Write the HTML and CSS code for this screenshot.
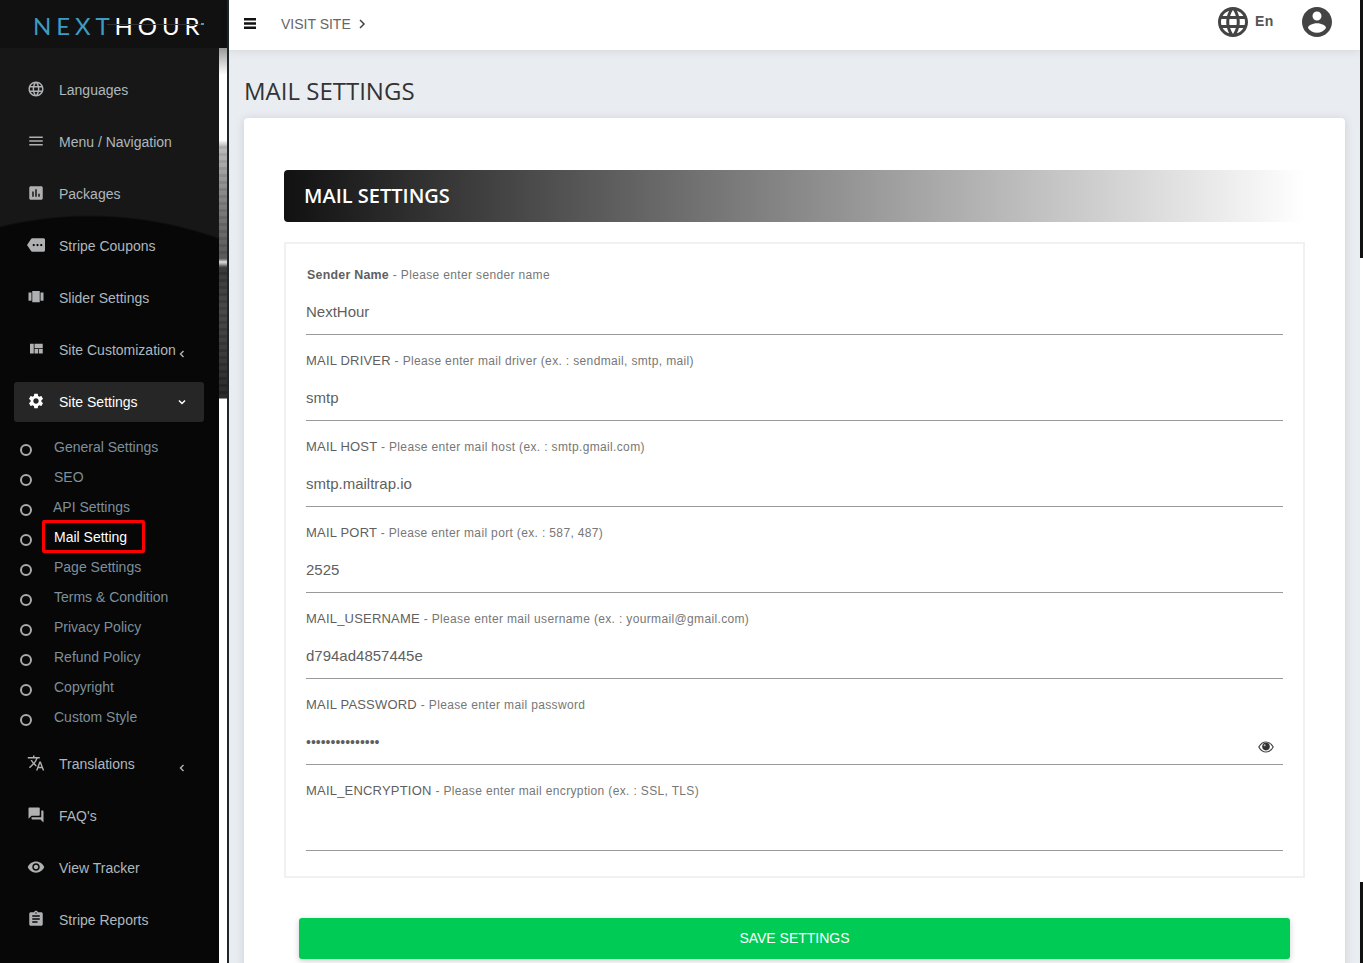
FILE: index.html

```html
<!doctype html>
<html>
<head>
    <title>Mail Settings</title>
    <meta charset="utf-8" />
    <link rel="stylesheet" href="styles.css">
</head>
<body>
<svg class="sprite" xmlns="http://www.w3.org/2000/svg">
    <symbol id="i-language" viewBox="0 0 24 24"><path d="M11.99 2C6.47 2 2 6.48 2 12s4.47 10 9.99 10C17.52 22 22 17.52 22 12S17.52 2 11.99 2zm6.93 6h-2.95c-.32-1.25-.78-2.45-1.38-3.56 1.84.63 3.37 1.91 4.33 3.56zM12 4.04c.83 1.2 1.48 2.53 1.91 3.96h-3.82c.43-1.43 1.08-2.76 1.91-3.96zM4.26 14C4.1 13.36 4 12.69 4 12s.1-1.36.26-2h3.38c-.08.66-.14 1.32-.14 2 0 .68.06 1.34.14 2H4.26zm.82 2h2.95c.32 1.25.78 2.45 1.38 3.56-1.84-.63-3.37-1.9-4.33-3.56zm2.95-8H5.08c.96-1.66 2.49-2.93 4.33-3.56C8.81 5.55 8.35 6.75 8.03 8zM12 19.96c-.83-1.2-1.48-2.53-1.91-3.96h3.82c-.43 1.43-1.08 2.76-1.91 3.96zM14.34 14H9.66c-.09-.66-.16-1.32-.16-2 0-.68.07-1.35.16-2h4.68c.09.65.16 1.32.16 2 0 .68-.07 1.34-.16 2zm.25 5.56c.6-1.11 1.06-2.31 1.38-3.56h2.95c-.96 1.65-2.49 2.93-4.33 3.56zM16.36 14c.08-.66.14-1.32.14-2 0-.68-.06-1.34-.14-2h3.38c.16.64.26 1.31.26 2s-.1 1.36-.26 2h-3.38z"/></symbol>
    <symbol id="i-menu" viewBox="0 0 24 24"><path d="M3 18h18v-2H3v2zm0-5h18v-2H3v2zm0-7v2h18V6H3z"/></symbol>
    <symbol id="i-bars" viewBox="0 0 12 11"><path d="M0 0h12v2.4H0zM0 4.3h12v2.4H0zM0 8.6h12V11H0z"/></symbol>
    <symbol id="i-assessment" viewBox="0 0 24 24"><path d="M19 3H5c-1.1 0-2 .9-2 2v14c0 1.1.9 2 2 2h14c1.1 0 2-.9 2-2V5c0-1.1-.9-2-2-2zM9 17H7v-7h2v7zm4 0h-2V7h2v10zm4 0h-2v-4h2v4z"/></symbol>
    <symbol id="i-more" viewBox="0 0 24 24"><path d="M22 3H7c-.69 0-1.23.35-1.59.88L0 12l5.41 8.11c.36.53.9.89 1.59.89h15c1.1 0 2-.9 2-2V5c0-1.1-.9-2-2-2zM9 13.5c-.83 0-1.5-.67-1.5-1.5s.67-1.5 1.5-1.5 1.5.67 1.5 1.5-.67 1.5-1.5 1.5zm5 0c-.83 0-1.5-.67-1.5-1.5s.67-1.5 1.5-1.5 1.5.67 1.5 1.5-.67 1.5-1.5 1.5zm5 0c-.83 0-1.5-.67-1.5-1.5s.67-1.5 1.5-1.5 1.5.67 1.5 1.5-.67 1.5-1.5 1.5z"/></symbol>
    <symbol id="i-carousel" viewBox="0 0 24 24"><path d="M7 19h10V4H7v15zm-5-2h4V6H2v11zM18 6v11h4V6h-4z"/></symbol>
    <symbol id="i-quilt" viewBox="0 0 24 24"><path d="M10 18h5v-6h-5v6zm-6 0h5V5H4v13zm12 0h5v-6h-5v6zM10 5v6h11V5H10z"/></symbol>
    <symbol id="i-settings" viewBox="0 0 24 24"><path d="M19.14 12.94c.04-.3.06-.61.06-.94 0-.32-.02-.64-.07-.94l2.03-1.58c.18-.14.23-.41.12-.61l-1.92-3.32c-.12-.22-.37-.29-.59-.22l-2.39.96c-.5-.38-1.03-.7-1.62-.94l-.36-2.54c-.04-.24-.24-.41-.48-.41h-3.84c-.24 0-.43.17-.47.41l-.36 2.54c-.59.24-1.13.57-1.62.94l-2.39-.96c-.22-.08-.47 0-.59.22L2.74 8.87c-.12.21-.08.47.12.61l2.03 1.58c-.05.3-.09.63-.09.94s.02.64.07.94l-2.03 1.58c-.18.14-.23.41-.12.61l1.92 3.32c.12.22.37.29.59.22l2.39-.96c.5.38 1.03.7 1.62.94l.36 2.54c.05.24.24.41.48.41h3.84c.24 0 .44-.17.47-.41l.36-2.54c.59-.24 1.13-.56 1.62-.94l2.39.96c.22.08.47 0 .59-.22l1.92-3.32c.12-.22.07-.47-.12-.61l-2.01-1.58zM12 15.6c-1.98 0-3.6-1.62-3.6-3.6s1.62-3.6 3.6-3.6 3.6 1.62 3.6 3.6-1.62 3.6-3.6 3.6z"/></symbol>
    <symbol id="i-translate" viewBox="0 0 24 24"><path d="M12.87 15.07l-2.54-2.51.03-.03c1.74-1.94 2.98-4.17 3.71-6.53H17V4h-7V2H8v2H1v1.99h11.17C11.5 7.92 10.44 9.75 9 11.35 8.07 10.32 7.3 9.19 6.69 8h-2c.73 1.63 1.73 3.17 2.98 4.56l-5.09 5.02L4 19l5-5 3.11 3.11.76-2.04zM18.5 10h-2L12 22h2l1.12-3h4.75L21 22h2l-4.5-12zm-2.62 7l1.62-4.33L19.12 17h-3.24z"/></symbol>
    <symbol id="i-forum" viewBox="0 0 24 24"><path d="M21 6h-2v9H6v2c0 .55.45 1 1 1h11l4 4V7c0-.55-.45-1-1-1zm-4 6V3c0-.55-.45-1-1-1H3c-.55 0-1 .45-1 1v14l4-4h10c.55 0 1-.45 1-1z"/></symbol>
    <symbol id="i-visibility" viewBox="0 0 24 24"><path d="M12 4.5C7 4.5 2.73 7.61 1 12c1.73 4.39 6 7.5 11 7.5s9.27-3.11 11-7.5c-1.73-4.39-6-7.5-11-7.5zM12 17c-2.76 0-5-2.24-5-5s2.24-5 5-5 5 2.24 5 5-2.24 5-5 5zm0-8c-1.66 0-3 1.34-3 3s1.34 3 3 3 3-1.34 3-3-1.34-3-3-3z"/></symbol>
    <symbol id="i-eye" viewBox="0 0 16 12"><path d="M.8 6C2.5 3 5 1 8 1s5.5 2 7.2 5c-1.7 3-4.2 5-7.2 5S2.5 9 .8 6z" fill="none" stroke="#444" stroke-width="1.2"/><circle cx="8" cy="5.6" r="3.8" fill="#333"/><circle cx="6.6" cy="4.3" r="1" fill="#bbb"/></symbol>
    <symbol id="i-assignment" viewBox="0 0 24 24"><path d="M19 3h-4.18C14.4 1.84 13.3 1 12 1c-1.3 0-2.4.84-2.82 2H5c-1.1 0-2 .9-2 2v14c0 1.1.9 2 2 2h14c1.1 0 2-.9 2-2V5c0-1.1-.9-2-2-2zm-7 0c.55 0 1 .45 1 1s-.45 1-1 1-1-.45-1-1 .45-1 1-1zm2 14H7v-2h7v2zm3-4H7v-2h10v2zm0-4H7V7h10v2z"/></symbol>
    <symbol id="i-account" viewBox="0 0 24 24"><path d="M12 2C6.48 2 2 6.48 2 12s4.48 10 10 10 10-4.48 10-10S17.52 2 12 2zm0 3c1.66 0 3 1.34 3 3s-1.34 3-3 3-3-1.34-3-3 1.34-3 3-3zm0 14.2c-2.5 0-4.71-1.28-6-3.22.03-1.99 4-3.08 6-3.08 1.99 0 5.97 1.09 6 3.08-1.29 1.94-3.5 3.22-6 3.22z"/></symbol>
    <symbol id="i-left" viewBox="0 0 10 10"><path d="M6.5 2 3.5 5l3 3" fill="none" stroke="currentColor" stroke-width="1.4"/></symbol>
    <symbol id="i-right" viewBox="0 0 10 10"><path d="M3 1 7 5 3 9" fill="none" stroke="currentColor" stroke-width="1.5"/></symbol>
    <symbol id="i-down" viewBox="0 0 10 10"><path d="M2 3.5 5 6.5 8 3.5" fill="none" stroke="currentColor" stroke-width="1.5"/></symbol>
</svg>

<div class="page">
    <aside class="sidebar">
        <div class="logo"><span class="logo-next">NEXT</span><span class="logo-hour">HOUR</span></div>
        <nav class="nav">
            <a class="nav-link"><svg class="nav-icon"><use href="#i-language"/></svg>Languages</a>
            <a class="nav-link"><svg class="nav-icon"><use href="#i-menu"/></svg>Menu / Navigation</a>
            <a class="nav-link"><svg class="nav-icon"><use href="#i-assessment"/></svg>Packages</a>
            <a class="nav-link"><svg class="nav-icon"><use href="#i-more"/></svg>Stripe Coupons</a>
            <a class="nav-link"><svg class="nav-icon"><use href="#i-carousel"/></svg>Slider Settings</a>
            <a class="nav-link"><svg class="nav-icon"><use href="#i-quilt"/></svg>Site Customization<svg class="nav-arrow arrow-low"><use href="#i-left"/></svg></a>
            <a class="nav-link open"><svg class="nav-icon"><use href="#i-settings"/></svg>Site Settings<svg class="nav-arrow"><use href="#i-down"/></svg></a>
            <ul class="subnav">
                <li class="sub-item"><a>General Settings</a></li>
                <li class="sub-item"><a>SEO</a></li>
                <li class="sub-item"><a class="tight">API Settings</a></li>
                <li class="sub-item"><a class="current">Mail Setting</a></li>
                <li class="sub-item"><a>Page Settings</a></li>
                <li class="sub-item"><a>Terms &amp; Condition</a></li>
                <li class="sub-item"><a>Privacy Policy</a></li>
                <li class="sub-item"><a>Refund Policy</a></li>
                <li class="sub-item"><a>Copyright</a></li>
                <li class="sub-item"><a>Custom Style</a></li>
            </ul>
            <a class="nav-link"><svg class="nav-icon"><use href="#i-translate"/></svg>Translations<svg class="nav-arrow arrow-low"><use href="#i-left"/></svg></a>
            <a class="nav-link"><svg class="nav-icon"><use href="#i-forum"/></svg>FAQ's</a>
            <a class="nav-link"><svg class="nav-icon"><use href="#i-visibility"/></svg>View Tracker</a>
            <a class="nav-link"><svg class="nav-icon"><use href="#i-assignment"/></svg>Stripe Reports</a>
        </nav>
    </aside>
    <div class="side-edge"></div>

    <main class="main">
        <header class="topbar">
            <svg class="burger"><use href="#i-bars"/></svg>
            <a class="visit">VISIT SITE<svg class="visit-arrow"><use href="#i-right"/></svg></a>
            <div class="topbar-right">
                <svg class="top-globe"><use href="#i-language"/></svg>
                <span class="lang">En</span>
                <svg class="top-user"><use href="#i-account"/></svg>
            </div>
        </header>

        <h1 class="page-title">MAIL SETTINGS</h1>

        <section class="card">
            <h2 class="card-head">MAIL SETTINGS</h2>
            <form class="mail-form">
                <div class="field">
                    <label class="field-label first"><b>Sender Name</b> <span>- Please enter sender name</span></label>
                    <div class="field-input"><input type="text" value="NextHour"></div>
                </div>
                <div class="field">
                    <label class="field-label"><b>MAIL DRIVER</b> <span>- Please enter mail driver (ex. : sendmail, smtp, mail)</span></label>
                    <div class="field-input"><input type="text" value="smtp"></div>
                </div>
                <div class="field">
                    <label class="field-label"><b>MAIL HOST</b> <span>- Please enter mail host (ex. : smtp.gmail.com)</span></label>
                    <div class="field-input"><input type="text" value="smtp.mailtrap.io"></div>
                </div>
                <div class="field">
                    <label class="field-label"><b>MAIL PORT</b> <span>- Please enter mail port (ex. : 587, 487)</span></label>
                    <div class="field-input"><input type="text" value="2525"></div>
                </div>
                <div class="field">
                    <label class="field-label"><b>MAIL_USERNAME</b> <span>- Please enter mail username (ex. : yourmail@gmail.com)</span></label>
                    <div class="field-input"><input type="text" value="d794ad4857445e"></div>
                </div>
                <div class="field">
                    <label class="field-label"><b>MAIL PASSWORD</b> <span>- Please enter mail password</span></label>
                    <div class="field-input"><input class="secret" type="password" value="123456789012345"><svg class="eye"><use href="#i-eye"/></svg></div>
                </div>
                <div class="field">
                    <label class="field-label"><b>MAIL_ENCRYPTION</b> <span>- Please enter mail encryption (ex. : SSL, TLS)</span></label>
                    <div class="field-input"><input type="text" value=""></div>
                </div>
            </form>
            <button class="save-btn" type="button">SAVE SETTINGS</button>
        </section>
    </main>

    <div class="page-edge"><i></i><i></i></div>
</div>
</body>
</html>
```

FILE: styles.css

```css
*, *::before, *::after {
    box-sizing: border-box;
}

html, body {
    margin: 0;
    height: 100%;
    overflow: hidden;
}

body {
    font-family: "Liberation Sans", Arial, sans-serif;
    background: #fff;
}

.sprite {
    display: none;
}

.page {
    display: flex;
    height: 963px;
    overflow: hidden;
}

/* sidebar */
.sidebar {
    width: 219px;
    flex: none;
    color: #aeb7bd;
    background:
        radial-gradient(ellipse 400px 420px at 90px 635px, #070707 99.5%, rgba(7, 7, 7, 0) 100%),
        #171717;
}

.logo {
    height: 48px;
    padding: 12px 0 0 33px;
    font-family: Lato, sans-serif;
    font-size: 24px;
    line-height: 28px;
    letter-spacing: 4.9px;
    background: #111;
    white-space: nowrap;
}

.logo-next {
    color: #3d9cc4;
}

.logo-hour {
    position: relative;
    color: #fff;
}

/* thin line through the word and the dot behind it */
.logo-hour::before {
    content: "";
    position: absolute;
    left: -8px;
    right: 2px;
    top: 13px;
    height: 1px;
    background: #333;
}

.logo-hour::after {
    content: "";
    position: absolute;
    right: 0;
    top: 12px;
    width: 3px;
    height: 2px;
    background: #3d9cc4;
}

.nav {
    display: block;
    padding-top: 16px;
}

.nav-link {
    position: relative;
    display: flex;
    align-items: center;
    height: 52px;
    padding-left: 27px;
    font-size: 14px;
    white-space: nowrap;
}

.nav-icon {
    width: 18px;
    height: 18px;
    margin-right: 14px;
    margin-top: -3px;
    flex: none;
    fill: #aeb0b1;
}

.nav-arrow {
    width: 10px;
    height: 10px;
    position: absolute;
    left: 177px;
    color: #aeb7bd;
}

.arrow-low {
    margin-top: 7px;
}

.nav-link.open {
    height: 40px;
    margin: 6px 15px 6px 14px;
    padding-left: 13px;
    color: #fff;
    background: #262626;
    border-radius: 3px;
}

.nav-link.open .nav-icon {
    fill: #fff;
}

.nav-link.open .nav-arrow {
    left: 163px;
    color: #fff;
}

.subnav {
    list-style: none;
    margin: 0 0 6px;
    padding: 4px 0 0;
}

.sub-item {
    display: flex;
    align-items: center;
    height: 30px;
    padding-left: 20px;
    font-size: 14px;
    color: #7d8f9b;
}

.sub-item::before {
    content: "";
    width: 12px;
    height: 12px;
    margin: 6px 22px 0 0;
    flex: none;
    border: 2.5px solid #aaa;
    border-radius: 50%;
}

.sub-item .tight {
    margin-left: -1px;
}

.sub-item .current {
    position: relative;
    color: #fff;
}

/* red box around the current page */
.sub-item .current::after {
    content: "";
    position: absolute;
    left: -12px;
    right: -18px;
    top: -9px;
    bottom: -8px;
    border: 3px solid #f00;
    border-radius: 2px;
}

.side-edge {
    width: 10px;
    flex: none;
    border-right: 2px solid #1d262b;
    background:
        repeating-linear-gradient(to bottom, rgba(0, 0, 0, .07) 0 3px, rgba(255, 255, 255, .03) 3px 7px) 0 146px / 100% 252px no-repeat,
        linear-gradient(to bottom,
        #111 0, #111 48px, #999 48px, #fff 75px, #fff 140px, #bbb 146px, #888 190px, #666 230px,
        #555 258px, #ddd 262px, #333 268px, #444 310px, #333 360px, #222 398px, #fff 399px);
}

/* right part */
.main {
    flex: 1;
    min-width: 0;
    display: flex;
    flex-direction: column;
    background: #e9edf2;
}

.topbar {
    display: flex;
    align-items: center;
    flex: none;
    height: 50px;
    padding: 0 0 2px 15px;
    background: #fff;
    box-shadow: 0 2px 8px rgba(0, 0, 0, .08);
}

.burger {
    width: 12px;
    height: 11px;
    margin-top: -1px;
    fill: #111;
}

.visit {
    display: flex;
    align-items: center;
    margin-left: 25px;
    font-size: 14px;
    color: #666;
}

.visit-arrow {
    width: 10px;
    height: 10px;
    margin-left: 6px;
    color: #444;
}

.topbar-right {
    display: flex;
    align-items: center;
    margin-left: auto;
    padding-right: 25px;
}

.top-globe {
    width: 36px;
    height: 36px;
    margin-top: -4px;
    fill: #444;
}

.lang {
    margin: -6px 0 0 4px;
    font-size: 14px;
    font-weight: bold;
    letter-spacing: .6px;
    color: #555;
}

.top-user {
    width: 36px;
    height: 36px;
    margin: -4px 0 0 25px;
    fill: #444;
}

.page-title {
    flex: none;
    margin: 0;
    padding: 24px 0 10px 15px;
    font-family: "Open Sans", sans-serif;
    font-size: 24px;
    line-height: 34px;
    font-weight: 400;
    color: #333;
}

.card {
    flex: none;
    height: 900px;
    margin: 0 15px;
    padding: 52px 40px 0;
    background: #fff;
    border-radius: 4px;
    box-shadow: 0 1px 10px rgba(0, 0, 0, .13);
}

.card-head {
    height: 52px;
    margin: 0 0 20px;
    padding-left: 20px;
    font-family: "Open Sans", sans-serif;
    font-size: 20px;
    line-height: 52px;
    font-weight: 600;
    color: #fff;
    border-radius: 4px;
    background: linear-gradient(to right, #111, #fff);
}

.mail-form {
    padding: 5px 20px 25px;
    border: 2px solid #f1f1f1;
}

.field {
    height: 86px;
    padding-top: 16px;
}

.field-label {
    display: block;
    height: 20px;
    font-size: 13px;
    line-height: 20px;
    letter-spacing: .2px;
    color: #666;
    white-space: nowrap;
}

.field-label b {
    font-weight: normal;
    color: #5f5f5f;
}

.field-label span {
    font-size: 12px;
    letter-spacing: .35px;
    color: #777;
}

.field-label.first {
    padding-left: 1px;
}

.field-label.first b {
    font-size: 12.4px;
    font-weight: bold;
    letter-spacing: .25px;
}

.field-input {
    display: flex;
    align-items: center;
    height: 50px;
    border-bottom: 1px solid #999;
}

.field-input input {
    flex: 1;
    min-width: 0;
    height: 49px;
    padding: 4px 0 0;
    font-family: "Liberation Sans", Arial, sans-serif;
    font-size: 15px;
    color: #5f5f5f;
    border: none;
    outline: none;
    background: transparent;
}

.field-input input.secret {
    font-size: 14px;
}

.eye {
    width: 16px;
    height: 12px;
    margin: 15px 9px 0 0;
    flex: none;
}

.save-btn {
    display: block;
    width: 991px;
    height: 41px;
    margin: 40px 0 0 15px;
    padding: 0 0 2px;
    font-family: "Liberation Sans", Arial, sans-serif;
    font-size: 14px;
    color: #fff;
    border: none;
    border-radius: 3px;
    background: #00cb54;
    box-shadow: 0 2px 6px rgba(0, 0, 0, .2);
}

.page-edge {
    width: 3px;
    flex: none;
    display: flex;
    flex-direction: column;
    justify-content: space-between;
    background: #fff;
}

.page-edge i {
    display: block;
    height: 258px;
    background: #111;
}

.page-edge i:last-child {
    height: 81px;
}
```
